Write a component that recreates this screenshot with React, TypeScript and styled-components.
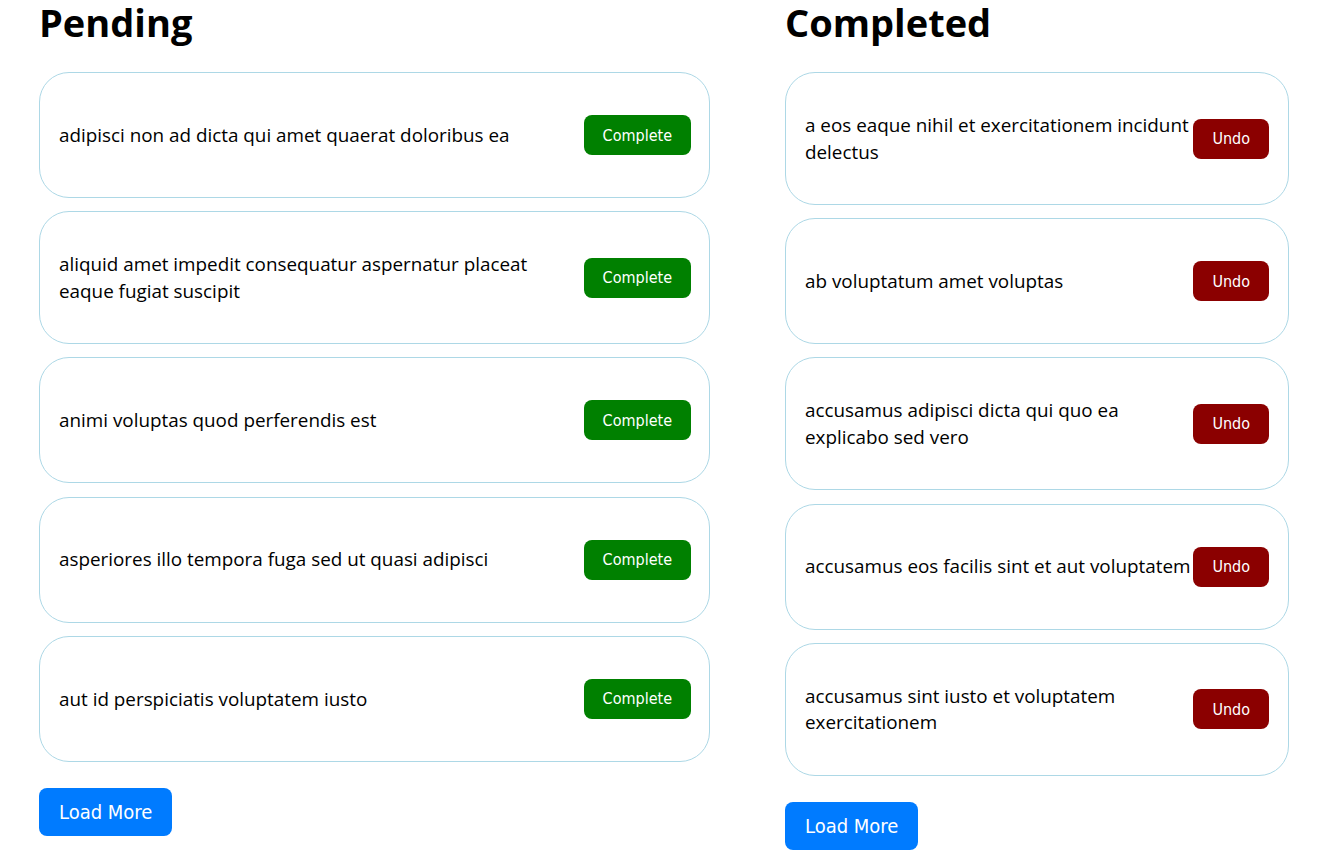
import React from "react";
import styled, { createGlobalStyle } from "styled-components";

const GlobalStyle = createGlobalStyle`
  html, body { margin: 0; padding: 0; background: #fff; }
  body { font-family: "Open Sans", "Noto Sans", sans-serif; color: #000; }
`;

const Page = styled.div`
  display: flex;
  align-items: flex-start;
  gap: 75px;
  padding: 0 0 0 39px;
`;

const Column = styled.section<{ $width: number }>`
  width: ${(p) => p.$width}px;
  display: flex;
  flex-direction: column;
`;

const Heading = styled.h1`
  margin: -5px 0 23px;
  font-size: 38px;
  line-height: 54px;
  font-weight: 700;
`;

const List = styled.div`
  display: flex;
  flex-direction: column;
  gap: 13.2px;
`;

const Card = styled.div<{ $gap: number; $padRight: number }>`
  display: flex;
  align-items: center;
  justify-content: space-between;
  gap: ${(p) => p.$gap}px;
  padding: 39px ${(p) => p.$padRight}px 39px 19px;
  border: 1px solid #add8e6;
  border-radius: 30px;
`;

const Title = styled.span<{ $max?: number }>`
  flex: 1;
  min-width: 0;
  font-size: 18.85px;
  line-height: 26.5px;
  max-width: ${(p) => (p.$max ? `${p.$max}px` : "none")};
`;

const ActionButton = styled.button<{ $tone: "complete" | "undo" }>`
  flex: none;
  margin: 3px 0;
  height: 40px;
  padding: 0 19px;
  border: none;
  border-radius: 8px;
  background: ${(p) => (p.$tone === "complete" ? "#008000" : "#8b0000")};
  color: #fff;
  font-family: "DejaVu Sans Condensed", "DejaVu Sans", sans-serif;
  font-size: 16px;
  cursor: pointer;
`;

const LoadMore = styled.button`
  align-self: flex-start;
  margin-top: 26px;
  height: 48px;
  padding: 0 20px;
  border: none;
  border-radius: 8px;
  background: #007bff;
  color: #fff;
  font-family: "DejaVu Sans Condensed", "DejaVu Sans", sans-serif;
  font-size: 20px;
  cursor: pointer;
`;

const pending = [
  "adipisci non ad dicta qui amet quaerat doloribus ea",
  "aliquid amet impedit consequatur aspernatur placeat eaque fugiat suscipit",
  "animi voluptas quod perferendis est",
  "asperiores illo tempora fuga sed ut quasi adipisci",
  "aut id perspiciatis voluptatem iusto",
];

const completed = [
  "a eos eaque nihil et exercitationem incidunt delectus",
  "ab voluptatum amet voluptas",
  "accusamus adipisci dicta qui quo ea explicabo sed vero",
  "accusamus eos facilis sint et aut voluptatem",
  "accusamus sint iusto et voluptatem exercitationem",
];

export default function App() {
  return (
    <>
      <GlobalStyle />
      <Page>
        <Column $width={671}>
          <Heading>Pending</Heading>
          <List>
            {pending.map((t) => (
              <Card key={t} $gap={8} $padRight={18}>
                <Title $max={500}>{t}</Title>
                <ActionButton $tone="complete">Complete</ActionButton>
              </Card>
            ))}
          </List>
          <LoadMore>Load More</LoadMore>
        </Column>
        <Column $width={504}>
          <Heading>Completed</Heading>
          <List>
            {completed.map((t) => (
              <Card key={t} $gap={0} $padRight={19}>
                <Title>{t}</Title>
                <ActionButton $tone="undo">Undo</ActionButton>
              </Card>
            ))}
          </List>
          <LoadMore>Load More</LoadMore>
        </Column>
      </Page>
    </>
  );
}
